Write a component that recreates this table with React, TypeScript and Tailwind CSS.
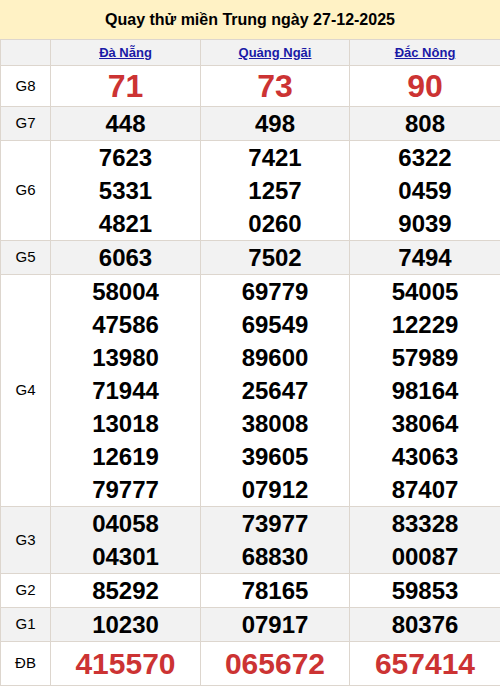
import React from 'react';

interface Row {
  label: string;
  values: string[][];
  kind?: 'big' | 'special';
  alt?: boolean;
}

const rows: Row[] = [
  { label: 'G8', values: [['71'], ['73'], ['90']], kind: 'big' },
  { label: 'G7', values: [['448'], ['498'], ['808']], alt: true },
  {
    label: 'G6',
    values: [
      ['7623', '5331', '4821'],
      ['7421', '1257', '0260'],
      ['6322', '0459', '9039'],
    ],
  },
  { label: 'G5', values: [['6063'], ['7502'], ['7494']], alt: true },
  {
    label: 'G4',
    values: [
      ['58004', '47586', '13980', '71944', '13018', '12619', '79777'],
      ['69779', '69549', '89600', '25647', '38008', '39605', '07912'],
      ['54005', '12229', '57989', '98164', '38064', '43063', '87407'],
    ],
  },
  { label: 'G3', values: [['04058', '04301'], ['73977', '68830'], ['83328', '00087']], alt: true },
  { label: 'G2', values: [['85292'], ['78165'], ['59853']] },
  { label: 'G1', values: [['10230'], ['07917'], ['80376']], alt: true },
  { label: 'ĐB', values: [['415570'], ['065672'], ['657414']], kind: 'special' },
];

const provinces = ['Đà Nẵng', 'Quảng Ngãi', 'Đắc Nông'];

const cell = 'border border-[#ddd6ce] p-0 text-center align-middle';

const App: React.FC = () => {
  return (
    <div className="w-[500px] bg-white font-['Liberation_Sans',Arial,sans-serif] text-black">
      {/* Title */}
      <div className="h-[39px] bg-[#fff2c5] flex items-center justify-center">
        <h1 className="text-[16px] font-bold">Quay thử miền Trung ngày 27-12-2025</h1>
      </div>

      <table className="w-[500px] table-fixed border-collapse">
        <colgroup>
          <col className="w-[50px]" />
          <col className="w-[150px]" />
          <col className="w-[149px]" />
          <col className="w-[151px]" />
        </colgroup>
        <thead>
          <tr className="bg-[#f2f2f2]">
            <th className={`${cell} h-[26px]`}></th>
            {provinces.map((p) => (
              <th key={p} className={`${cell} h-[26px] text-[13px] font-bold leading-[25px]`}>
                <a href="#" className="text-[#1a1aa6] underline">
                  {p}
                </a>
              </th>
            ))}
          </tr>
        </thead>
        <tbody>
          {rows.map((row) => (
            <tr key={row.label} className={row.alt ? 'bg-[#f2f2f2]' : 'bg-white'}>
              <td className={`${cell} text-[15px] font-normal`}>{row.label}</td>
              {row.values.map((vals, i) => (
                <td key={i} className={cell}>
                  {vals.map((v) => (
                    <div
                      key={v}
                      className={
                        row.kind === 'big'
                          ? 'text-[32px] font-bold leading-[40px] text-[#cc3333]'
                          : row.kind === 'special'
                          ? 'text-[30px] font-bold leading-[43px] text-[#cc3333]'
                          : 'text-[24px] font-bold leading-[33px]'
                      }
                    >
                      {v}
                    </div>
                  ))}
                </td>
              ))}
            </tr>
          ))}
        </tbody>
      </table>
    </div>
  );
};

export default App;
